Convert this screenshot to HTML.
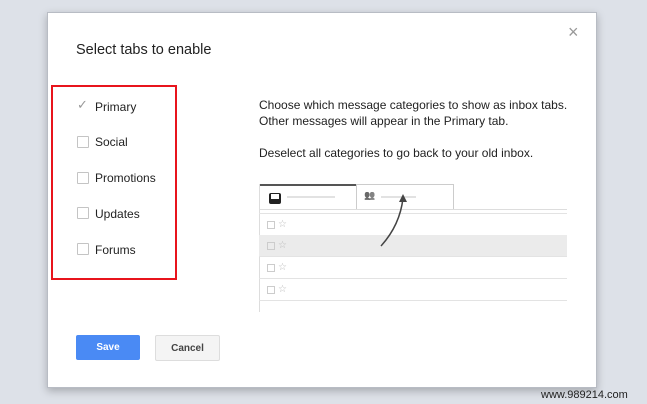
<!DOCTYPE html><html><head><style>
body{margin:0;width:647px;height:404px;background:#dde1e8;position:relative;overflow:hidden;font-family:"Liberation Sans",Arial,sans-serif;}
.d{position:absolute;left:47px;top:12px;width:548px;height:374px;background:#fff;border:1px solid #b8bcc4;box-shadow:0 3px 8px rgba(0,0,0,.25);}
.a{position:absolute}
.cb{position:absolute;left:77px;width:10px;height:10px;border:1px solid #c4c4c4;border-radius:1px}
.lb{position:absolute;left:95px;font-size:12px;color:#222}
.t{font-size:12px;color:#222;line-height:16px}
.row{position:absolute;left:259px;width:308px;height:21px;border-bottom:1px solid #e3e3e3}
.row i{position:absolute;left:8px;top:7px;width:6px;height:6px;border:1px solid #ccc}
.row b{position:absolute;left:19px;top:6px;font-size:10px;line-height:10px;color:#bbb;font-weight:normal}
</style></head><body>
<div class="d"></div>
<div class="a" style="left:568px;top:22px;font-size:18px;color:#999">×</div>
<div class="a" style="left:76px;top:42px;font-size:14.5px;color:#222">Select tabs to enable</div>
<div class="a" style="left:51px;top:85px;width:122px;height:191px;border:2px solid #e8141c"></div>
<div class="a" style="left:77px;top:98px;font-size:13px;color:#999;line-height:13px">✓</div>
<div class="lb" style="top:100px">Primary</div>
<div class="cb" style="top:136px"></div><div class="lb" style="top:135px">Social</div>
<div class="cb" style="top:172px"></div><div class="lb" style="top:171px">Promotions</div>
<div class="cb" style="top:207px"></div><div class="lb" style="top:207px">Updates</div>
<div class="cb" style="top:243px"></div><div class="lb" style="top:243px">Forums</div>
<div class="a t" style="left:259px;top:97px">Choose which message categories to show as inbox tabs.<br>Other messages will appear in the Primary tab.</div>
<div class="a t" style="left:259px;top:145px">Deselect all categories to go back to your old inbox.</div>
<div class="a" style="left:259px;top:184px;width:97px;height:26px;border-top:2px solid #555;background:#fff"></div>
<div class="a" style="left:269px;top:193px;width:8px;height:8px;border:2px solid #222;border-top-width:1px;border-radius:2px;background:#fff;box-shadow:inset 0 4px 0 #fff,inset 0 -3px 0 #222"></div>
<div class="a" style="left:287px;top:196px;width:48px;height:2px;background:#e2e2e2"></div>
<div class="a" style="left:356px;top:184px;width:96px;height:24px;border:1px solid #ccc;border-bottom:none"></div>
<div class="a" style="left:364px;top:190px;font-size:9px;color:#777;filter:grayscale(1)">👥</div>
<div class="a" style="left:381px;top:196px;width:35px;height:2px;background:#e2e2e2"></div>
<div class="a" style="left:259px;top:209px;width:308px;height:1px;background:#ddd"></div>
<div class="a" style="left:259px;top:184px;width:1px;height:128px;background:#ddd"></div>
<div class="row" style="top:213px;border-top:1px solid #e3e3e3"><i></i><b>☆</b></div>
<div class="row" style="top:235px;background:#ebebeb"><i></i><b>☆</b></div>
<div class="row" style="top:257px"><i></i><b>☆</b></div>
<div class="row" style="top:279px"><i></i><b>☆</b></div>
<svg class="a" style="left:370px;top:190px" width="40" height="62"><path d="M11 56 Q30 35 33 8" stroke="#444" stroke-width="1.5" fill="none"/><path d="M29 12 L33 4 L37 12 Z" fill="#444"/></svg>
<div class="a" style="left:76px;top:335px;width:64px;height:25px;background:#4a8af4;border-radius:2px;color:#fff;font-size:10px;font-weight:bold;text-align:center;line-height:26px">Save</div>
<div class="a" style="left:155px;top:335px;width:63px;height:24px;background:#f4f4f4;border:1px solid #ddd;border-radius:2px;color:#444;font-size:10px;font-weight:bold;text-align:center;line-height:25px">Cancel</div>
<div class="a" style="left:541px;top:389px;font-size:11px;color:#222">www.989214.com</div>
</body></html>
